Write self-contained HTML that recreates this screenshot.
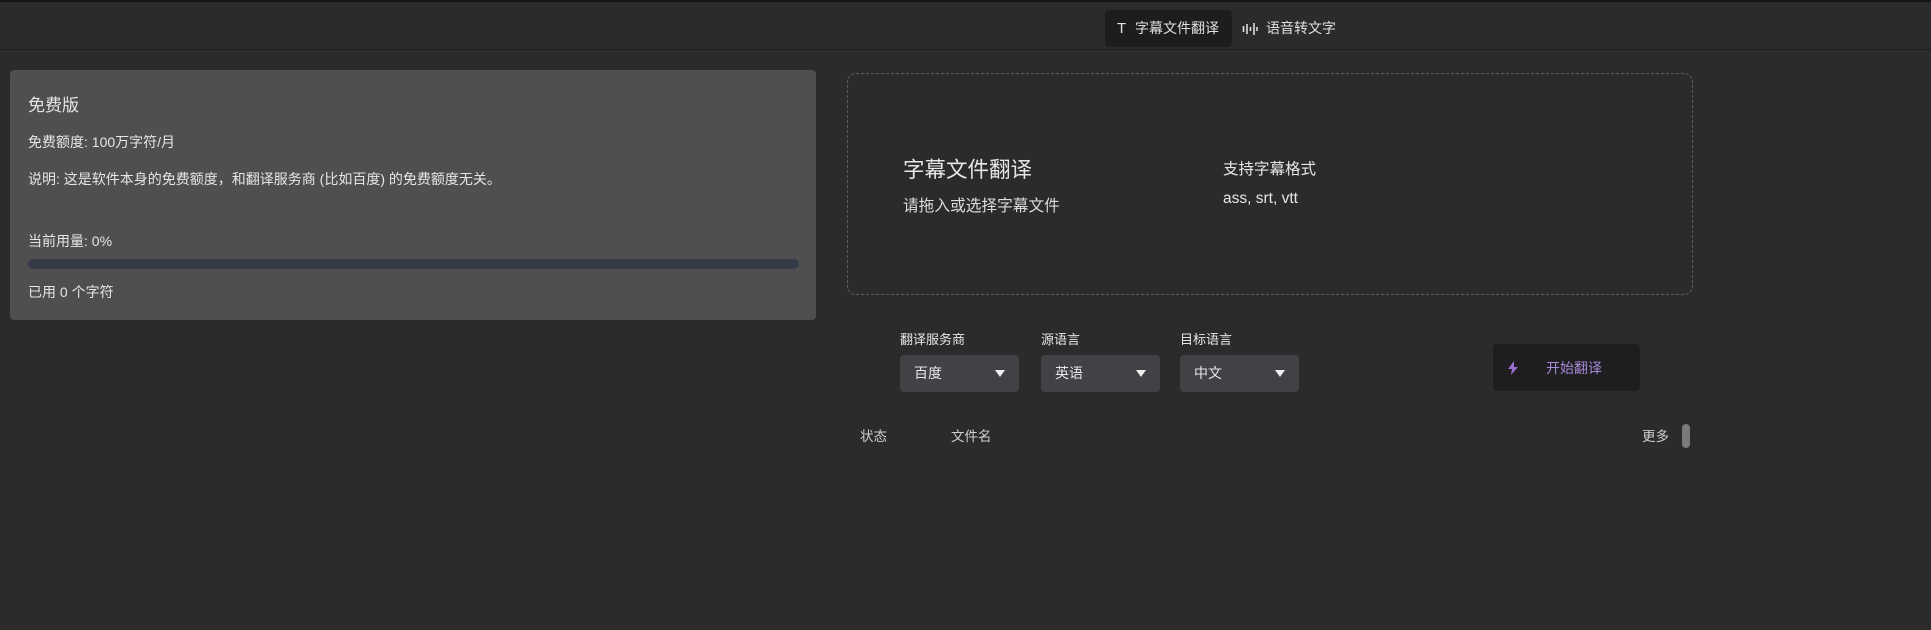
<!DOCTYPE html>
<html><head><meta charset="utf-8"><style>
*{margin:0;padding:0;box-sizing:border-box}
body{width:1931px;height:630px;background:#2b2b2b;font-family:"Liberation Sans","Noto Sans CJK SC",sans-serif;color:#e6e6e6;position:relative;overflow:hidden}
.a{position:absolute;white-space:nowrap}
.top{position:absolute;left:0;top:0;width:1931px;height:50px;border-top:2px solid #151515;border-bottom:1px solid #1c1c1c;background:#2b2b2b}
.tab{position:absolute;top:10px;height:37px;border-radius:4px;font-size:14px;line-height:37px;color:#e0e0e0}
.card{position:absolute;left:10px;top:70px;width:806px;height:250px;background:#4f4f4f;border-radius:4px}
.drop{position:absolute;left:847px;top:73px;width:846px;height:222px;border:1px dashed #5e5e5e;border-radius:9px}
.sel{position:absolute;top:355px;width:119px;height:37px;background:#414146;border-radius:4px;font-size:14px;line-height:37px;padding-left:14px;color:#e8e8e8}
.sel:after{content:"";position:absolute;right:14px;top:15px;border-left:5px solid transparent;border-right:5px solid transparent;border-top:7px solid #eee}
.lbl{font-size:13px;color:#e6e6e6}
.c{font-size:14px}
</style></head><body>
<div class="top"></div>
<div class="tab" style="left:1105px;width:127px;background:#1d1d1d"><span style="position:absolute;left:12px;font-size:15px">T</span><span style="position:absolute;left:30px">字幕文件翻译</span></div>
<div class="tab" style="left:1240px;width:110px">
<svg style="position:absolute;left:2px;top:12px" width="16" height="14" viewBox="0 0 16 14"><g stroke="#ddd" stroke-width="1.6"><line x1="1.5" y1="4" x2="1.5" y2="10"/><line x1="5" y1="2" x2="5" y2="12"/><line x1="8.5" y1="5" x2="8.5" y2="9"/><line x1="12" y1="1" x2="12" y2="13"/><line x1="15" y1="5" x2="15" y2="9"/></g></svg>
<span style="position:absolute;left:26px">语音转文字</span></div>
<div class="card"></div>
<div class="a" style="left:28px;top:91px;font-size:17px">免费版</div>
<div class="a c" style="left:28px;top:132px">免费额度: 100万字符/月</div>
<div class="a c" style="left:28px;top:169px">说明: 这是软件本身的免费额度，和翻译服务商 (比如百度) 的免费额度无关。</div>
<div class="a c" style="left:28px;top:231px">当前用量: 0%</div>
<div class="a" style="left:28px;top:259px;width:771px;height:10px;border-radius:5px;background:#363b48"></div>
<div class="a c" style="left:28px;top:282px">已用 0 个字符</div>
<div class="drop"></div>
<div class="a" style="left:903px;top:153px;font-size:21.5px">字幕文件翻译</div>
<div class="a" style="left:903px;top:193px;font-size:15.7px;color:#ddd">请拖入或选择字幕文件</div>
<div class="a" style="left:1223px;top:157px;font-size:15.5px">支持字幕格式</div>
<div class="a" style="left:1223px;top:190px;font-size:15.5px">ass, srt, vtt</div>
<div class="a lbl" style="left:900px;top:329px">翻译服务商</div>
<div class="a lbl" style="left:1041px;top:329px">源语言</div>
<div class="a lbl" style="left:1180px;top:329px">目标语言</div>
<div class="sel" style="left:900px">百度</div>
<div class="sel" style="left:1041px">英语</div>
<div class="sel" style="left:1180px">中文</div>
<div class="a" style="left:1493px;top:344px;width:147px;height:47px;background:#1e1d1f;border-radius:4px">
<svg style="position:absolute;left:14px;top:17px" width="12" height="14" viewBox="0 0 12 14"><path d="M7 0L1 8h4l-1 6 7-8H7z" fill="#9b6fd0"/></svg>
<span style="position:absolute;left:53px;top:14px;font-size:14px;color:#a88ad6">开始翻译</span></div>
<div class="a" style="left:860px;top:425px;font-size:13.5px;color:#cfcfcf">状态</div>
<div class="a" style="left:951px;top:425px;font-size:13.5px;color:#cfcfcf">文件名</div>
<div class="a" style="left:1642px;top:425px;font-size:13.5px;color:#cfcfcf">更多</div>
<div class="a" style="left:1682px;top:424px;width:8px;height:24px;border-radius:4px;background:#7a7a7a"></div>
</body></html>
